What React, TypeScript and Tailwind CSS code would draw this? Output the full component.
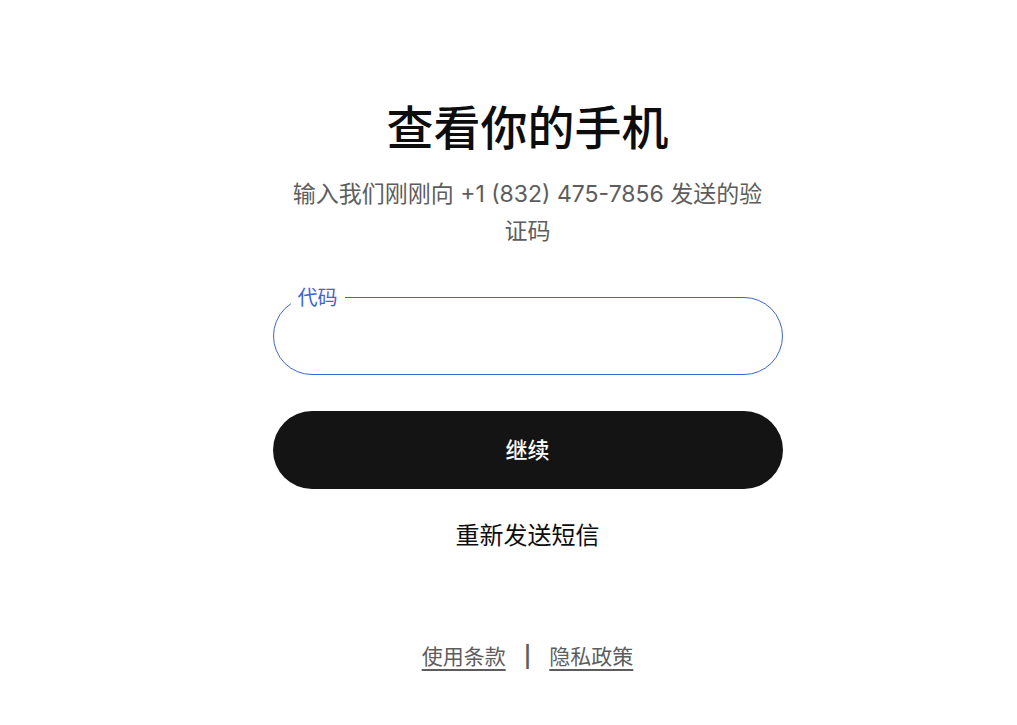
export default function App() {
  return (
    <div
      className="min-h-screen bg-white flex flex-col items-center pl-[38px]"
      style={{ fontFamily: 'Inter, "Noto Sans CJK SC", sans-serif' }}
    >
      <div className="w-[510px] flex flex-col items-center pt-[98px]">
        <h1 className="text-[47px] leading-[60px] font-medium text-[#0d0d0d]">查看你的手机</h1>
        <p className="mt-[18px] w-[480px] text-center text-[23px] leading-[37px] text-[#5d5d5d]">
          输入我们刚刚向 +1 (832) 475-7856 发送的验证码
        </p>

        <div className="relative mt-[47px] w-full">
          <input
            className="w-full h-[78px] rounded-full border border-[#3b66d6] px-6 text-[18px] outline-none"
          />
          <label className="absolute left-[18px] -top-[11px] bg-white px-[7px] text-[20px] leading-[24px] text-[#3b66d6]">
            代码
          </label>
        </div>

        <button className="mt-9 w-full h-[78px] rounded-full bg-[#141414] text-white text-[22px] font-medium">
          继续
        </button>

        <button className="mt-[30px] text-[24px] leading-[34px] text-[#0d0d0d]">重新发送短信</button>
      </div>

      <div className="mt-[88px] flex items-center gap-[18px] text-[21px] text-[#5d5d5d]">
        <a className="underline underline-offset-[5px]">使用条款</a>
        <span className="font-semibold text-[#5d5d5d]">|</span>
        <a className="underline underline-offset-[5px]">隐私政策</a>
      </div>
    </div>
  );
}
